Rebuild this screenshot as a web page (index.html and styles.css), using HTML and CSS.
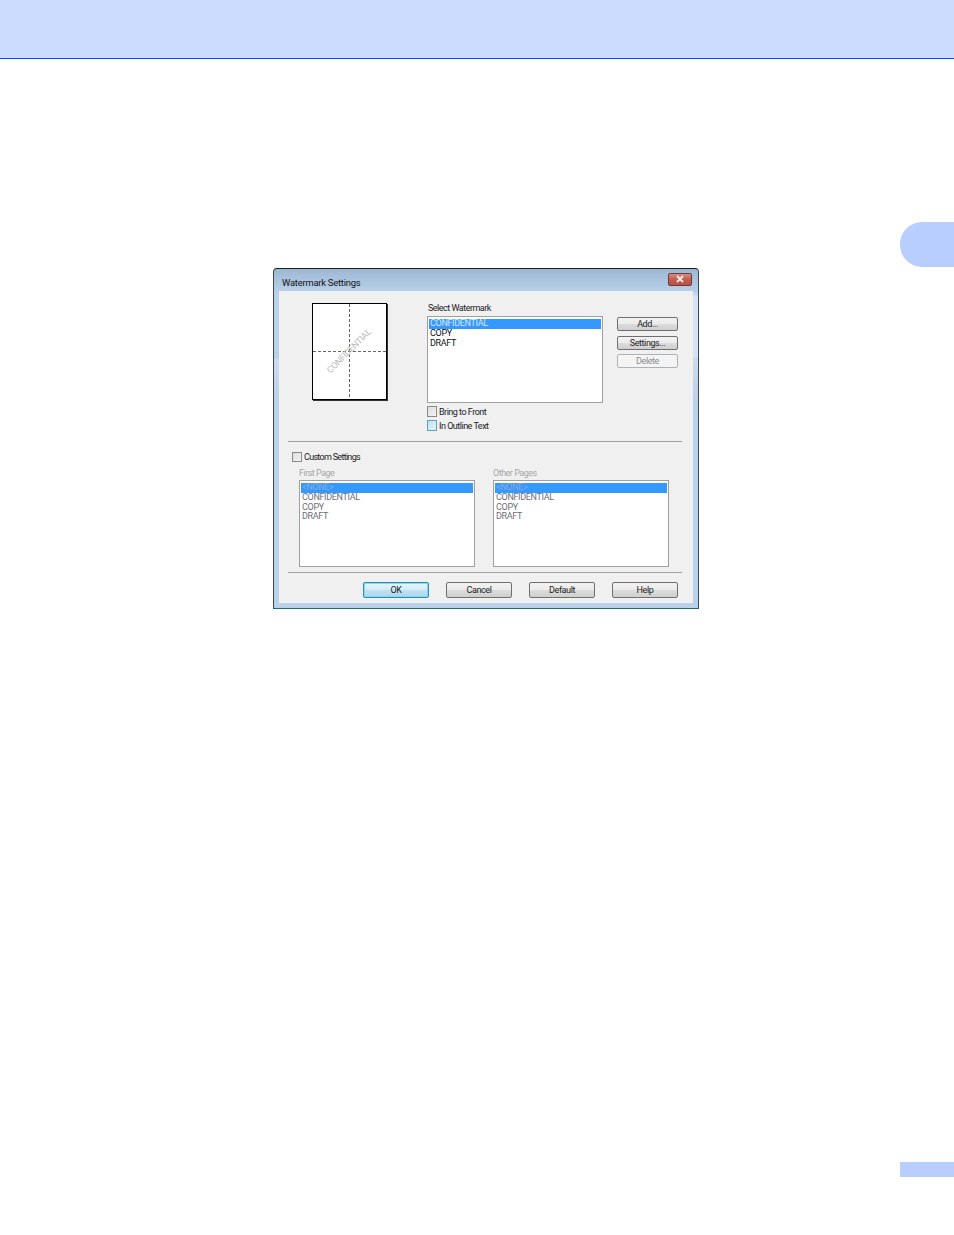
FILE: index.html
```html
<!DOCTYPE html>
<html lang="en">
<head>
<meta charset="utf-8">
<title>Watermark Settings</title>
<link rel="stylesheet" href="styles.css">
</head>
<body>
<header class="top-band"></header>
<main class="page">
  <div class="chapter-tab"></div>
  <section class="dialog">
    <div class="titlebar">
      <span class="title">Watermark Settings</span>
      <span class="close">
        <svg width="12" height="8" viewBox="0 0 12 8"><path d="M3 1l6 6M9 1L3 7" stroke="#f4e8e6" stroke-width="2" fill="none"/></svg>
      </span>
    </div>
    <div class="client">
      <div class="top-row">
        <div class="preview">
          <svg width="73" height="95" viewBox="0 0 73 95">
            <path d="M36.5 0V95M0 47.5H73" stroke="#666" stroke-width="1" stroke-dasharray="3 2" fill="none"/>
            <text class="wm-text" x="36.5" y="47.5" text-anchor="middle" dominant-baseline="middle" transform="rotate(-45 36.5 47.5)">CONFIDENTIAL</text>
          </svg>
        </div>
        <div class="select-col">
          <div class="label">Select Watermark</div>
          <div class="listbox">
            <div class="item selected">CONFIDENTIAL</div>
            <div class="item">COPY</div>
            <div class="item">DRAFT</div>
          </div>
          <label class="check"><span class="box"></span>Bring to Front</label>
          <label class="check"><span class="box box-hover"></span>In Outline Text</label>
        </div>
        <div class="side-buttons">
          <button class="btn side">Add...</button>
          <button class="btn side side-second">Settings...</button>
          <button class="btn side disabled">Delete</button>
        </div>
      </div>
      <hr class="sep">
      <label class="check custom"><span class="box"></span>Custom Settings</label>
      <div class="pages">
        <div class="page-col">
          <div class="label muted">First Page</div>
          <div class="listbox muted-list">
            <div class="item selected">&lt;NONE&gt;</div>
            <div class="item">CONFIDENTIAL</div>
            <div class="item">COPY</div>
            <div class="item">DRAFT</div>
          </div>
        </div>
        <div class="page-col">
          <div class="label muted">Other Pages</div>
          <div class="listbox muted-list">
            <div class="item selected">&lt;NONE&gt;</div>
            <div class="item">CONFIDENTIAL</div>
            <div class="item">COPY</div>
            <div class="item">DRAFT</div>
          </div>
        </div>
      </div>
      <hr class="sep sep-two">
      <div class="footer">
        <button class="btn foot default">OK</button>
        <button class="btn foot">Cancel</button>
        <button class="btn foot">Default</button>
        <button class="btn foot">Help</button>
      </div>
    </div>
  </section>
  <div class="page-badge"></div>
</main>
</body>
</html>
```
FILE: styles.css
```css
* { box-sizing: border-box; }
html, body { margin: 0; padding: 0; background: #fff; }
body { width: 954px; height: 1235px; overflow: hidden; font-family: Roboto, "Liberation Sans", Arial, sans-serif; }

.top-band { height: 59px; background: #ccdcff; border-bottom: 1px solid #0055ff; }
.page { display: flex; flex-direction: column; }
.chapter-tab { align-self: flex-end; width: 54px; height: 45px; margin-top: 163px; background: #b8ceff; border-radius: 22px 0 0 22px; }
.page-badge { align-self: flex-end; width: 54px; height: 15px; margin-top: 553px; background: #b8ceff; }

.dialog {
  width: 426px; height: 341px; margin: 1px 0 0 273px; padding: 0 5px 5px;
  border: 1px solid #3a4650; border-top-color: #1c1c1c; border-bottom-color: #1f6a78; border-radius: 4px 4px 0 0;
  background:
    linear-gradient(180deg, rgba(214,228,242,0) 0%, rgba(214,228,242,0) 7%, #d5e3f2 8%, #d5e3f2 26%, rgba(214,228,242,0) 26.5%) right top / 5px 100% no-repeat,
    linear-gradient(180deg, #9db8d4 0%, #b9d1ea 7%, #b9d1ea 26%, #cbdcee 27%, #b9d1ea 40%, #b9d1ea 100%);
  display: flex; flex-direction: column;
}
.titlebar { height: 22px; flex: none; display: flex; align-items: center; justify-content: space-between; padding: 0 1px 0 3px; }
.title { font-size: 9.4px; letter-spacing: -0.22px; color: #111; position: relative; top: 2px; }
.close { width: 24px; height: 13px; margin-top: -2px; display: flex; align-items: center; justify-content: center; border: 1px solid #6e3a34; border-radius: 2px; background: linear-gradient(180deg, #d68f84, #c55a4c 50%, #b8524a); }

.client { width: 414px; height: 312px; background: #f0f0f0; font-size: 9px; color: #111; display: flex; flex-direction: column; }
.top-row { display: flex; align-items: flex-start; padding-top: 12px; height: 150px; flex: none; }
.preview { width: 75px; height: 97px; margin-left: 33px; background: #fff; border: 1px solid #000; box-shadow: 1px 1px 0 #333; }
.preview svg { display: block; }
.wm-text { font-family: Roboto, "Liberation Sans", Arial, sans-serif; font-size: 9px; letter-spacing: -0.3px; fill: #bcbcbc; }

.select-col { width: 176px; margin-left: 40px; }
.label { height: 13px; line-height: 10px; padding-left: 1px; letter-spacing: -0.5px; color: #222; }
.listbox { width: 176px; height: 87px; padding: 2px 1px; background: #fff; border: 1px solid #a0a0a0; }
.item { height: 9.7px; line-height: 8px; padding-left: 1px; letter-spacing: -0.33px; white-space: nowrap; color: #111; }
.item.selected { height: 10px; background: #3399ff; color: #d6e8ff; }

.check { display: flex; align-items: center; height: 11px; gap: 2px; margin-top: 3px; white-space: nowrap; letter-spacing: -0.5px; color: #222; }
.box { width: 10px; height: 11px; flex: none; border: 1px solid #8a8a8a; background: linear-gradient(135deg, #dcdcdc, #f4f4f4); }
.box-hover { border-color: #5fa0c8; background: linear-gradient(135deg, #bfe2f6, #e4f4fc); }

.side-buttons { display: flex; flex-direction: column; gap: 4px; margin: 14px 0 0 14px; }
.btn { display: block; padding: 0; font: inherit; font-size: 9px; letter-spacing: -0.4px; color: #222; text-align: center; border: 1px solid #707070; border-radius: 2px; background: linear-gradient(180deg, #f2f2f2 0%, #ebebeb 48%, #dcdcdc 52%, #cfcfcf 100%); }
.side { width: 61px; height: 14px; line-height: 10px; }
.side-second { margin-top: 1px; }
.btn.disabled { color: #8c8c8c; background: #f4f4f4; border-color: #adb2b5; }

.sep { display: block; height: 1px; margin: 0 0 0 9px; width: 394px; border: 0; background: #a0a0a0; flex: none; }
.custom { margin: 10px 0 0 13px; height: 10px; letter-spacing: -0.7px; }
.custom .box { height: 10px; }

.pages { display: flex; gap: 18px; margin: 5px 0 0 20px; }
.page-col { width: 176px; }
.label.muted { color: #a6a6a6; padding-left: 0; line-height: 12px; }
.muted-list .item { color: #6e6e78; }
.muted-list .item.selected { color: #85a9d8; }

.sep-two { margin-top: 5px; }
.footer { display: flex; gap: 17px; justify-content: flex-end; padding-right: 15px; margin-top: 9px; }
.foot { width: 66px; height: 16px; line-height: 13px; }
.btn.default { border-color: #2f8cb4; box-shadow: inset 0 0 0 1px #7fdcf8; background: linear-gradient(180deg, #e6f5fb 0%, #d4ecf7 48%, #bfe1f1 52%, #aed7eb 100%); }
```
